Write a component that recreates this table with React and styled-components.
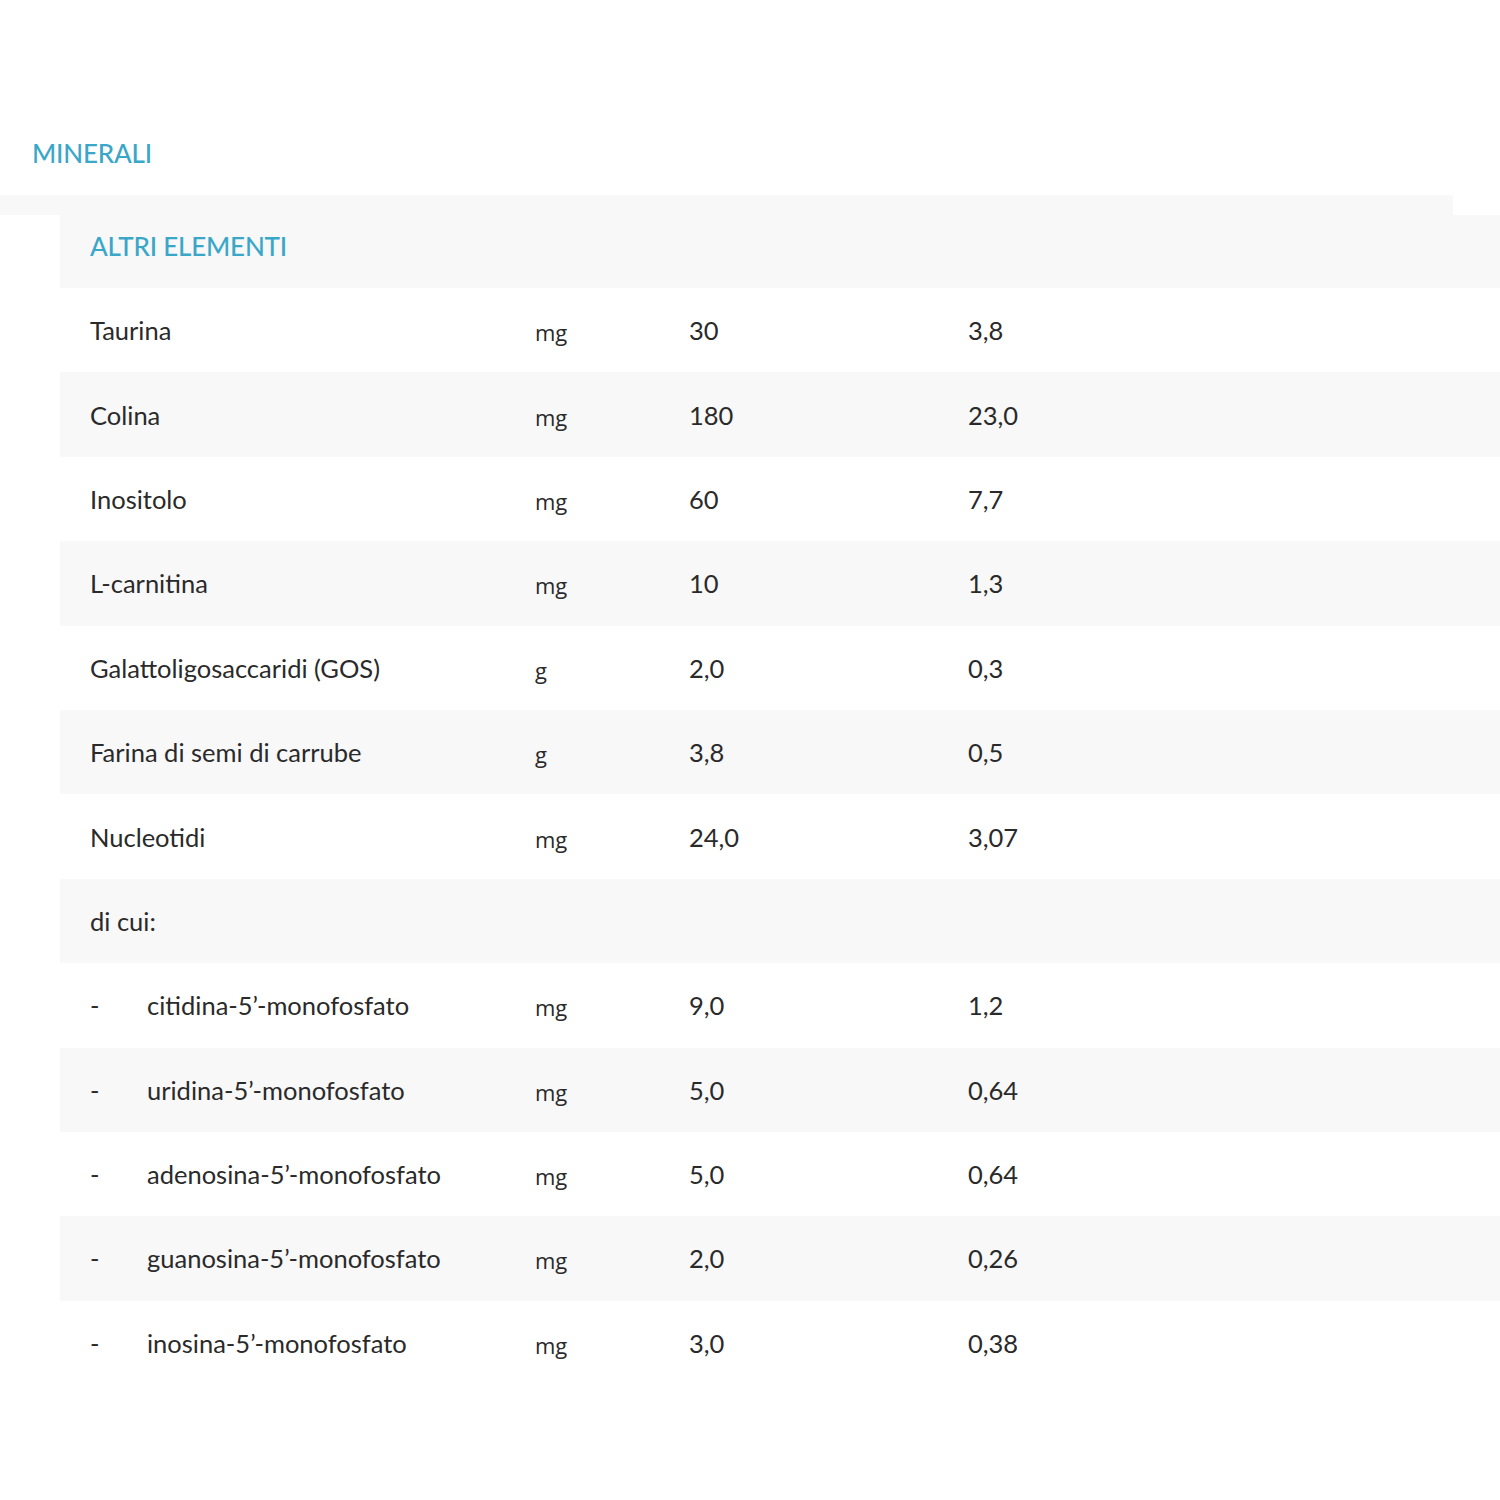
import React from "react";
import styled, { createGlobalStyle } from "styled-components";

const Global = createGlobalStyle`
  html, body { margin: 0; padding: 0; background: #ffffff; }
  body { font-family: Lato, "Open Sans", sans-serif; color: #2a2a2a; }
`;

const Page = styled.div`
  width: 1500px;
  padding-top: 138px;
  padding-bottom: 120px;
`;

const SectionTitle = styled.h2`
  margin: 0 0 0 32px;
  font-family: Lato, sans-serif;
  font-weight: 500;
  font-size: 26px;
  line-height: 30px;
  letter-spacing: -0.2px;
  color: #3aa7c9;
`;

const TopStrip = styled.div`
  margin-top: 27px;
  width: 1453px;
  height: 20px;
  background: #f8f8f9;
`;

const Table = styled.div`
  margin-left: 60px;
  display: flex;
  flex-direction: column;
`;

const HeaderRow = styled.div`
  height: 73px;
  background: #f8f8f9;
  padding-left: 30px;
  display: flex;
  align-items: flex-start;
`;

const HeaderText = styled.span`
  font-family: Lato, sans-serif;
  font-weight: 500;
  font-size: 26px;
  line-height: 30px;
  margin-top: 16px;
  letter-spacing: -0.2px;
  color: #3aa7c9;
`;

const Row = styled.div`
  height: 84.4px;
  display: grid;
  grid-template-columns: 445px 154px 279px 1fr;
  align-items: center;
  padding-left: 30px;
  background: ${(p) => (p.$shaded ? "#f8f8f9" : "#ffffff")};
`;

const Name = styled.div`
  font-family: Lato, sans-serif;
  font-size: 25.5px;
  color: #2a2a2a;
  display: flex;
  white-space: nowrap;
`;

const Dash = styled.span`
  width: 57px;
`;

const Unit = styled.div`
  font-family: "Open Sans", sans-serif;
  font-size: 22px;
  color: #2a2a2a;
  padding-top: 4px;
`;

const Num = styled.div`
  font-family: Lato, sans-serif;
  font-size: 25.5px;
  color: #2a2a2a;
`;

const rows = [
  { name: "Taurina", unit: "mg", a: "30", b: "3,8" },
  { name: "Colina", unit: "mg", a: "180", b: "23,0" },
  { name: "Inositolo", unit: "mg", a: "60", b: "7,7" },
  { name: "L-carnitina", unit: "mg", a: "10", b: "1,3" },
  { name: "Galattoligosaccaridi (GOS)", unit: "g", a: "2,0", b: "0,3" },
  { name: "Farina di semi di carrube", unit: "g", a: "3,8", b: "0,5" },
  { name: "Nucleotidi", unit: "mg", a: "24,0", b: "3,07" },
  { name: "di cui:", unit: "", a: "", b: "" },
  { name: "citidina-5’-monofosfato", sub: true, unit: "mg", a: "9,0", b: "1,2" },
  { name: "uridina-5’-monofosfato", sub: true, unit: "mg", a: "5,0", b: "0,64" },
  { name: "adenosina-5’-monofosfato", sub: true, unit: "mg", a: "5,0", b: "0,64" },
  { name: "guanosina-5’-monofosfato", sub: true, unit: "mg", a: "2,0", b: "0,26" },
  { name: "inosina-5’-monofosfato", sub: true, unit: "mg", a: "3,0", b: "0,38" },
];

export default function App() {
  return (
    <>
      <Global />
      <Page>
        <SectionTitle>MINERALI</SectionTitle>
        <TopStrip />
        <Table>
          <HeaderRow>
            <HeaderText>ALTRI ELEMENTI</HeaderText>
          </HeaderRow>
          {rows.map((r, i) => (
            <Row key={r.name} $shaded={i % 2 === 1}>
              <Name>
                {r.sub && <Dash>-</Dash>}
                {r.name}
              </Name>
              <Unit>{r.unit}</Unit>
              <Num>{r.a}</Num>
              <Num>{r.b}</Num>
            </Row>
          ))}
        </Table>
      </Page>
    </>
  );
}
